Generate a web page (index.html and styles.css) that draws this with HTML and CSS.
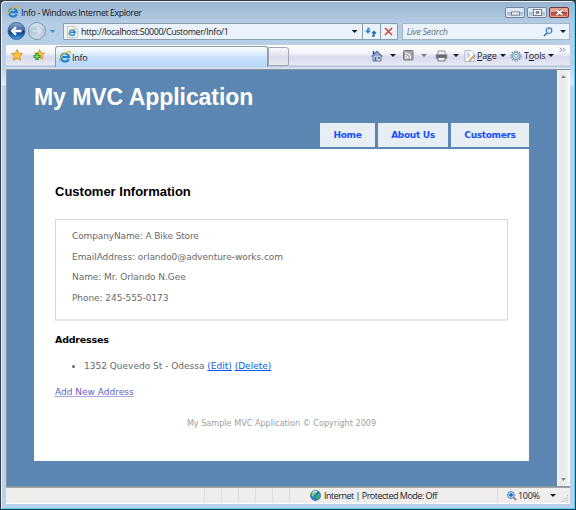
FILE: index.html
```html
<!DOCTYPE html>
<html lang="en">
<head>
<meta charset="utf-8">
<title>Info</title>
<link rel="stylesheet" href="styles.css">
</head>
<body>
<svg class="defs" width="0" height="0">
  <defs>
    <linearGradient id="ball" x1="0" y1="0" x2="0" y2="1"><stop offset="0" stop-color="#93aed0"/><stop offset=".46" stop-color="#3765a5"/><stop offset=".5" stop-color="#0c3179"/><stop offset="1" stop-color="#35a5ee"/></linearGradient>
    <linearGradient id="pale" x1="0" y1="0" x2="0" y2="1"><stop offset="0" stop-color="#dce7f2"/><stop offset=".5" stop-color="#b5c7da"/><stop offset="1" stop-color="#c9dced"/></linearGradient>
    <symbol id="ie" viewBox="0 0 12 12">
      <path d="M9.7 8.2A4 4 0 1 1 10 6.2H3.5" fill="none" stroke="#1683d5" stroke-width="2.2"/>
      <path d="M3.3 4.6Q5 2.3 7.5 3" fill="none" stroke="#6bc5f4" stroke-width="1"/>
      <path d="M1 11C-.8 8.8 3 3.6 7.5 1.3c3-1.6 4.4-.7 3.5 1.4" fill="none" stroke="#eeb52d" stroke-width="1.2"/>
    </symbol>
    <symbol id="star" viewBox="0 0 12 12"><path d="M6 .6 7.6 4.2 11.5 4.6 8.7 7.3 9.5 11.2 6 9.2 2.5 11.2 3.3 7.3.5 4.6 4.4 4.2Z" fill="#ffc637" stroke="#d88a20" stroke-width=".9"/></symbol>
  </defs>
</svg>
<div class="window">
  <header class="titlebar">
    <svg class="title-icon" width="12" height="12"><use href="#ie"/></svg>
    <span class="title-text">Info - Windows Internet Explorer</span>
    <div class="controls">
      <span class="control"><svg width="18" height="9"><rect x="5.500" y="4" width="8" height="3" fill="#fff" stroke="#59677b" stroke-width=".8"/></svg></span>
      <span class="control"><svg width="18" height="9"><rect x="5.500" y="1.500" width="8" height="6" fill="#fff" stroke="#59677b" stroke-width=".8"/><rect x="8" y="3.500" width="3" height="2" fill="#8599b1" stroke="#59677b" stroke-width=".6"/></svg></span>
      <span class="control close"><svg width="18" height="9"><path d="m6.500 2 6 5m0-5-6 5" stroke="#764646" stroke-width="3"/><path d="m6.500 2 6 5m0-5-6 5" stroke="#fff" stroke-width="1.800"/></svg></span>
    </div>
  </header>

  <nav class="address-row">
    <svg class="history" width="50" height="20">
      <circle cx="9.500" cy="10" r="8.500" fill="url(#ball)" stroke="#49658d"/>
      <path d="M14.500 10H5.500M9 6.200 5.200 10 9 13.800" fill="none" stroke="#fff" stroke-width="2.300"/>
      <circle cx="30" cy="10" r="8.500" fill="url(#pale)" stroke="#8197b1"/>
      <path d="M25.500 10h8M30.500 6.500 34 10l-3.500 3.500" fill="none" stroke="#d6e3ef" stroke-width="2"/>
      <path d="M43 9h5l-2.500 3Z" fill="#3992c5"/>
    </svg>
    <div class="address">
      <svg width="11" height="12"><path d="M.5.500h7l3 3v8H.5Z" fill="#fff" stroke="#b0b7c0" stroke-width=".8"/><use href="#ie" x="1" y="2" width="8.500" height="8.500"/></svg>
      <span class="url">http://localhost:50000/Customer/Info/1</span>
      <i class="arrow"></i>
      <span class="addr-btn refresh"><svg width="12" height="12"><path d="M5 2.500H3v4M1 4.500l2 2.200 2-2.200" fill="none" stroke="#3287c9" stroke-width="1.500"/><path d="M7 10h2V6M7 7.500l2-2 2 2" fill="none" stroke="#2b67ae" stroke-width="1.500"/></svg></span>
      <span class="addr-btn"><svg width="9" height="9"><path d="m1 1 7 7M8 1 1 8" stroke="#d83f37" stroke-width="1.500"/></svg></span>
    </div>
    <div class="search">
      <span class="hint">Live Search</span>
      <svg width="10" height="10"><circle cx="6" cy="3.700" r="2.800" fill="#d7edff" stroke="#347dc2" stroke-width="1.200"/><path d="M4 6 1 9" stroke="#4479ab" stroke-width="1.700"/></svg>
      <i class="arrow"></i>
    </div>
  </nav>

  <div class="toolbar">
    <div class="favorites">
      <svg width="12" height="12"><use href="#star"/></svg>
      <svg width="12" height="12"><use href="#star" x="1" width="11" height="11"/><path d="M4 4v7M.5 7.500h7" stroke="#32942d" stroke-width="3.200"/><path d="M4 5v5M1.500 7.500h5" stroke="#8ddb6c" stroke-width="1.200"/></svg>
    </div>
    <div class="tab"><svg width="12" height="12"><use href="#ie"/></svg><span>Info</span></div>
    <div class="new-tab"></div>
    <div class="commands">
      <svg class="home" width="12" height="12"><path d="M2 6v5h8V6" fill="#e0e5ed" stroke="#6a7694"/><path d="M.6 6.600 6 1.300l5.400 5.300" fill="#99a9d0" stroke="#536da4" stroke-width="1.200"/><path d="M2.500 1v3" stroke="#2338be" stroke-width="1.500"/><path d="M3.500 7h2v4h-2zM7 7h2v2H7z" fill="#4275b1"/></svg>
      <i class="arrow a-home"></i>
      <svg class="feed" width="11" height="11"><rect x=".5" y=".5" width="9.500" height="9.500" rx="1" fill="#a8a8a8" stroke="#747474"/><path d="M2 5.500q3 0 3 3M2 3q5.500 0 5.500 5.500" fill="none" stroke="#fff" stroke-width="1.100"/><circle cx="2.700" cy="7.900" r=".8" fill="#fff"/></svg>
      <i class="arrow a-feed"></i>
      <svg class="printer" width="13" height="12"><path d="M3 5V1h7v4" fill="#f5f5f5" stroke="#929292"/><path d="M1 4.500h11v4H1z" fill="#646970" stroke="#989ca2"/><path d="M3 7.500h7v3.500H3z" fill="#e9edf0" stroke="#777"/></svg>
      <i class="arrow a-print"></i>
      <svg class="page-icon" width="12" height="12"><path d="M1 .5h6l3 3v8H1Z" fill="#fff" stroke="#9ba3ae" stroke-width=".8"/><path d="M3 3h2m-2 2h3M3 7h2" stroke="#829fc8"/><path d="m5 10 5-5 1 1-5 5Z" fill="#edb54b" stroke="#9d7b48" stroke-width=".5"/></svg>
      <span class="page-label"><u>P</u>age</span>
      <i class="arrow a-page"></i>
      <svg class="gear" width="12" height="12"><circle cx="6" cy="6" r="4.600" fill="none" stroke="#7f9db2" stroke-width="2" stroke-dasharray="1.400 1"/><circle cx="6" cy="6" r="3.600" fill="#bdd8e9" stroke="#7f9db2"/><circle cx="6" cy="6" r="1.500" fill="#f2f7fb" stroke="#7f9db2" stroke-width=".7"/></svg>
      <span class="tools-label">T<u>o</u>ols</span>
      <i class="arrow a-tools"></i>
      <svg class="more" width="7" height="6"><path d="m.8.700 2 2-2 2m3-4 2 2-2 2" fill="none" stroke="#67709b" stroke-width=".9"/></svg>
    </div>
  </div>

  <div class="viewport">
    <main class="page">
      <h1>My MVC Application</h1>
      <nav class="menu"><a class="m-home">Home</a><a class="m-about">About Us</a><a class="m-cust">Customers</a></nav>
      <section class="content">
        <h2>Customer Information</h2>
        <div class="info">
          <p class="p1">CompanyName: A Bike Store</p>
          <p class="p2">EmailAddress: orlando0@adventure-works.com</p>
          <p class="p3">Name: Mr. Orlando N.Gee</p>
          <p class="p4">Phone: 245-555-0173</p>
        </div>
        <h3>Addresses</h3>
        <ul><li>1352 Quevedo St - Odessa <a>(Edit)</a> <a>(Delete)</a></li></ul>
        <div class="add"><a>Add New Address</a></div>
        <footer>My Sample MVC Application © Copyright 2009</footer>
      </section>
    </main>
    <div class="scrollbar">
      <svg width="7" height="5"><path d="M1 4h5L3.500 1Z" fill="#858585"/></svg>
      <svg width="7" height="5"><path d="M1 1h5L3.500 4Z" fill="#858585"/></svg>
    </div>
  </div>

  <div class="status">
    <div class="cells"><b></b><b></b><b></b><b></b><b></b><b></b></div>
    <div class="zone">
      <svg width="11" height="11"><circle cx="5.500" cy="5.500" r="5" fill="#2e80cd" stroke="#31629a" stroke-width=".7"/><path d="M1.500 3Q4 0 7 1L6 3.500 3.500 5 4 7 2 6Z" fill="#8cdc69"/><path d="m7 5 3-1v3L7.500 9.500 5.500 7Z" fill="#43b055"/><path d="M3 2q2-1.200 4-.5" stroke="#daf2ff" fill="none"/></svg>
      <span>Internet | Protected Mode: Off</span>
    </div>
    <div class="zoom">
      <svg width="10" height="10"><circle cx="4" cy="4" r="3.400" fill="#c4e4ff" stroke="#3d80ca"/><path d="M4 2v4M2 4h4" stroke="#1266b9" stroke-width="1.300"/><path d="m6.500 6.500 2.700 2.700" stroke="#a0826c" stroke-width="1.800"/></svg>
      <span>100%</span><i class="arrow"></i>
    </div>
    <svg class="grip" width="8" height="8"><path d="M5.500 0v8M3 3v5M.7 5.500V8" stroke="#b8b8b8" stroke-width="1.300" stroke-dasharray="1.300 1.200"/></svg>
  </div>
</div>
</body>
</html>
```

FILE: styles.css
```css
* { box-sizing: border-box; }
body { margin: 0; background: #354249; overflow: hidden; }
.defs { position: absolute; }
svg { display: block; flex: none; }
.window {
  width: 576px; height: 510px; display: flex; flex-direction: column;
  padding: 1px 5px 5px; border: 1px solid #353c45; border-right-color: #113e51; border-bottom-color: #113e51;
  border-radius: 5px 5px 0 0;
  background: linear-gradient(#98b3d0, #b4cce5 22px, #bad1e9 64px, #dceafa 84px, #b9d1ea 85px);
  box-shadow: inset 1px 1px #e4f0fb, inset -1px -1px #62d1ed;
  font: 9px "Open Sans", "Noto Sans", sans-serif; color: #16191e; white-space: nowrap;
}
.arrow { flex: none; width: 6px; height: 3px; background: #171b24; clip-path: polygon(0 0, 100% 0, 50% 100%); }
.titlebar { height: 19px; flex: none; display: flex; }
.title-icon { margin: 4px 0 0 1px; }
.title-text { margin: 4px 0 0 2px; line-height: 13px; font-size: 8.900px; letter-spacing: -.43px; }
.controls { margin: 5px 1px 0 auto; display: flex; gap: 2px; }
.control { width: 20px; height: 11px; border: 1px solid #74869c; border-radius: 2px; background: linear-gradient(#dce7f2 45%, #aabed3 50%, #c7d7e6); box-shadow: inset 0 0 0 1px #dce8f3; }
.control.close { background: linear-gradient(#e4a499 45%, #c1442e 50%, #d66d57); border-color: #6f383b; box-shadow: inset 0 0 0 1px #e8a092; }
.address-row { height: 24px; flex: none; display: flex; }
.history { margin-left: 1px; }
.address { width: 338px; height: 17px; margin: 2px 0 0 6px; display: flex; align-items: center; border: 1px solid #8b9dad; border-radius: 1px; background: #eaf2fb; padding-left: 3px; }
.url { margin-left: 3px; font-size: 8.900px; letter-spacing: -.4px; line-height: 13px; }
.address .arrow { margin-left: auto; margin-right: 4px; }
.addr-btn { width: 17px; height: 15px; display: grid; place-items: center; border-left: 1px solid #8b9dad; }
.refresh { width: 18px; }
.search { width: 170px; height: 17px; margin: 2px 0 0 4px; display: flex; align-items: center; border: 1px solid #a4b5c5; background: #eaf2fb; padding: 0 3px 0 4px; }
.hint { font-style: italic; color: #6b7178; letter-spacing: -.32px; }
.search svg { margin-left: auto; margin-right: 7px; }
.toolbar { height: 24px; flex: none; display: flex; background: linear-gradient(#fff, #f3f5fb 8px, #d7daec 12px, #e6e9f4 20px, #a9b9d6 21px, #c8d5e9 22px, #e4eaf3); }
.favorites { width: 49px; padding: 4px 0 0 5px; display: flex; gap: 10px; }
.tab { width: 213px; height: 21px; margin-top: 1px; padding: 4px 0 0 3px; display: flex; gap: 1px; border: 1px solid #919aa8; border-bottom: 0; border-radius: 3px 3px 0 0; background: linear-gradient(#fff, #e2f1fe 6px, #c6e1fc 11px, #b7d7fa); }
.tab span { line-height: 13px; letter-spacing: -.3px; }
.new-tab { width: 21px; height: 19px; margin-top: 2px; border: 1px solid #a1a5b0; border-radius: 0 3px 2px 0; background: linear-gradient(#f9fafd, #d9dcea 55%, #e8eaf3); }
.commands { display: flex; align-items: center; height: 21px; margin-left: 82px; position: relative; }
.a-home { margin-left: 7px; }
.feed { margin-left: 7px; }
.a-feed { margin-left: 7px; background: #777c87; }
.printer { margin-left: 8px; }
.a-print { margin-left: 5px; }
.page-icon { margin-left: 5px; }
.page-label { margin-left: 1px; width: 20px; letter-spacing: -.15px; }
.a-page { margin-left: 3px; }
.gear { margin-left: 4px; }
.tools-label { margin-left: 2px; width: 21px; letter-spacing: -.2px; }
.a-tools { margin-left: 3px; }
.more { position: absolute; right: -12px; top: 2px; }
.viewport { height: 418px; flex: none; display: flex; border: 1px solid #8492a1; border-width: 1px 0 1px 1px; }
.page { width: 551px; background: #5c87b2; padding: 0 28px 0 27px; font: 9px "DejaVu Sans", sans-serif; color: #696969; }
h1 { margin: 0; padding-top: 13px; height: 53px; font: bold 23px/28px "Liberation Sans", sans-serif; letter-spacing: -.05px; color: #fff; }
.menu { display: flex; justify-content: flex-end; gap: 3px; height: 26px; }
.menu a { height: 24px; line-height: 24px; text-align: center; background: #e8eef6; color: #174fff; font-weight: bold; letter-spacing: -.32px; }
.m-home { width: 55px; } .m-about { width: 70px; } .m-cust { width: 78px; }
.content { height: 312px; padding: 34px 21px 0; background: #fff; }
h2 { margin: 0; font: bold 13px/17px "Liberation Sans", sans-serif; color: #000; }
.info { height: 102px; margin-top: 19px; padding: 7px 16px; border: 1px solid #d8d8d8; border-bottom: 2px solid #e8e8e8; }
.info p { margin: 0; height: 20.500px; line-height: 18px; letter-spacing: -.06px; }
.info .p1 { letter-spacing: -.13px; }
h3 { margin: 11px 0 0; font: bold 9.500px/16px "DejaVu Sans", sans-serif; color: #000; letter-spacing: -.2px; }
ul { margin: 9px 0 0; padding-left: 29px; line-height: 18px; }
ul a { color: #0b5aef; text-decoration: underline; }
.add { margin-top: 8px; line-height: 18px; color: #6262bd; }
.add a { text-decoration: underline; text-decoration-color: #a8a8e1; }
footer { margin-top: 14px; line-height: 16px; font-size: 8.100px; color: #a0a0a0; text-align: center; }
.scrollbar { width: 13px; background: linear-gradient(90deg, #f7f7f7, #e9e9e9 3px, #eee 10px, #fff); display: flex; flex-direction: column; justify-content: space-between; padding: 4px 3px; }
.status { height: 17px; flex: none; display: flex; align-items: center; border-top: 1px solid #a5a5a5; border-bottom: 1px solid #fff; background: #f0eded; }
.cells { display: flex; gap: 16px; height: 15px; margin-left: 198px; }
.cells b { width: 1px; background: #dedddd; }
.zone { margin-left: 20px; display: flex; align-items: center; gap: 3px; width: 188px; height: 15px; border-right: 1px solid #dedddd; }
.zone span { letter-spacing: -.51px; }
.zoom { display: flex; align-items: center; margin-left: 9px; gap: 1px; }
.zoom span { width: 21px; letter-spacing: -.3px; }
.zoom .arrow { margin-left: 10px; }
.grip { margin-left: auto; margin-top: 7px; }
```
